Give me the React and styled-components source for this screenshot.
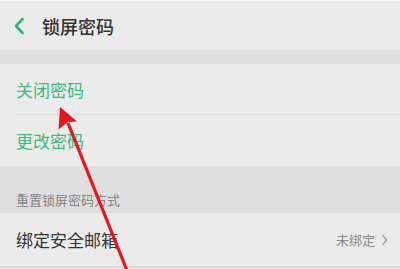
import styled, { createGlobalStyle } from "styled-components";

const Global = createGlobalStyle`
  html, body {
    margin: 0;
    padding: 0;
    background: #ebebeb;
  }
  body {
    font-family: "Noto Sans CJK SC", "Noto Sans", sans-serif;
  }
`;

const Screen = styled.div`
  position: relative;
  width: 400px;
  height: 269px;
  overflow: hidden;
  background: #ebebeb;
  border-top: 1px solid #f6f6f6;
  box-sizing: border-box;
`;

const Header = styled.div`
  display: flex;
  align-items: center;
  height: 49px;
  padding-left: 13px;
  gap: 17px;
  border-bottom: 1px solid #e2e2e2;
`;

const Title = styled.div`
  font-size: 18px;
  color: #333;
  font-weight: 500;
  letter-spacing: 0;
`;

const Band = styled.div`
  background: #dfdfdf;
  height: ${(p) => p.h}px;
  display: flex;
  align-items: flex-end;
  padding-left: 16px;
  box-sizing: border-box;
  padding-bottom: ${(p) => (p.h > 20 ? 3 : 0)}px;
`;

const BandLabel = styled.span`
  font-size: 13px;
  color: #858585;
  line-height: 20px;
`;

const Group = styled.div`
  padding-left: 16px;
`;

const Row = styled.div`
  display: flex;
  align-items: center;
  justify-content: space-between;
  height: ${(p) => p.h || 51}px;
  padding-right: 12px;
  box-sizing: border-box;
  border-bottom: ${(p) => (p.last ? "none" : "1px solid #dedede")};
`;

const RowText = styled.span`
  font-size: 17px;
  color: ${(p) => (p.green ? "#3fb97e" : "#333")};
`;

const Value = styled.span`
  display: flex;
  align-items: center;
  gap: 6px;
  font-size: 13px;
  color: #8a8a8a;
`;

const Bottom = styled.div`
  height: 2px;
  background: #dcdcdc;
`;

const Overlay = styled.svg`
  position: absolute;
  left: 0;
  top: 0;
  pointer-events: none;
`;

export default function App() {
  return (
    <>
      <Global />
      <Screen>
        <Header>
          <svg width="12" height="18" viewBox="0 0 12 18">
            <path d="M9.5 2 L3 9 L9.5 16" fill="none" stroke="#2db777" strokeWidth="2.6" strokeLinecap="round" strokeLinejoin="round" />
          </svg>
          <Title>锁屏密码</Title>
        </Header>
        <Band h={13} />
        <Group>
          <Row>
            <RowText green>关闭密码</RowText>
          </Row>
          <Row last>
            <RowText green>更改密码</RowText>
          </Row>
        </Group>
        <Band h={47}>
          <BandLabel>重置锁屏密码方式</BandLabel>
        </Band>
        <Group>
          <Row h={53} last>
            <RowText>绑定安全邮箱</RowText>
            <Value>
              未绑定
              <svg width="7" height="12" viewBox="0 0 7 12">
                <path d="M1.5 1 L5.5 6 L1.5 11" fill="none" stroke="#8a8a8a" strokeWidth="1.2" />
              </svg>
            </Value>
          </Row>
        </Group>
        <Bottom />
        <Overlay width="400" height="269" viewBox="0 0 400 269">
          <line x1="68" y1="122" x2="128" y2="272" stroke="#e8161c" strokeWidth="3.2" />
          <polygon points="60,106 77,120.5 68,121 58.5,128.5" fill="#e8161c" />
        </Overlay>
      </Screen>
    </>
  );
}
